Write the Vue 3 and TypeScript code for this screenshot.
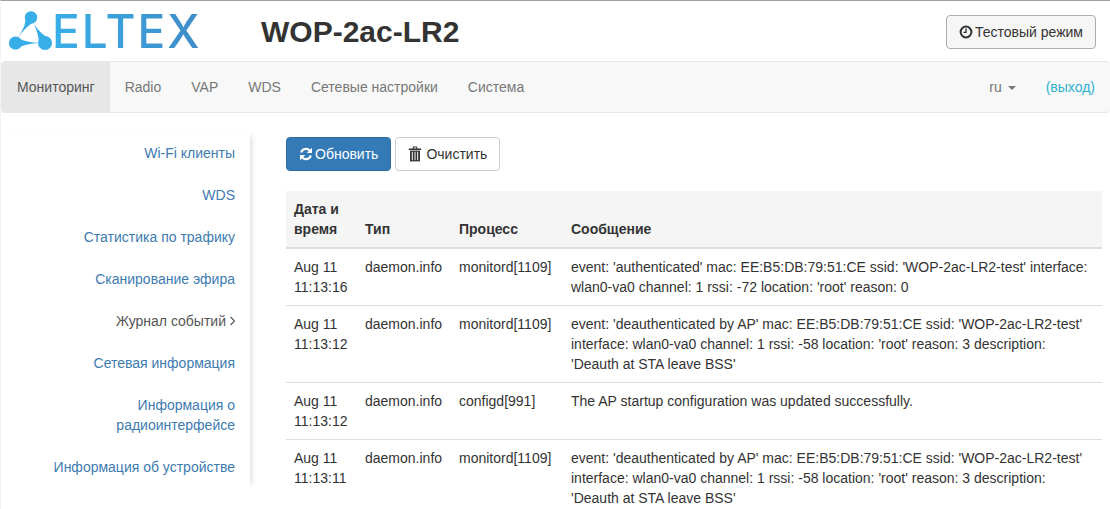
<template>
  <div class="page">
    <header class="top">
      <div class="brand">
        <svg class="brandIcon" width="60" height="60" viewBox="0 1 60 60">
          <g fill="#38aee8">
            <circle cx="31" cy="17.5" r="6.2" />
            <circle cx="15.5" cy="43" r="6.6" />
            <circle cx="45" cy="43" r="7" />
            <path d="M25.8 14.6 Q27 25 17.5 38 Q26 26.5 36 20.6Z" />
            <path d="M15.5 36.6 Q22 42 39 43 Q22 44 15.5 49.6Z" />
            <path d="M51 39.5 Q41 35 34 24 Q39.5 36 39 46.5Z" />
          </g>
        </svg>
        <span class="brandName">ELTEX</span>
      </div>
      <h1 class="title">WOP-2ac-LR2</h1>
      <button class="btn testBtn">
        <svg class="icon" width="14" height="14" viewBox="0 0 14 14">
          <circle cx="7" cy="7" r="5.4" fill="none" stroke="#333" stroke-width="2" />
          <path d="M7 3.6V7.4H4.4" fill="none" stroke="#333" stroke-width="1.4" />
        </svg>
        Тестовый режим
      </button>
    </header>

    <nav class="navbar">
      <a
        v-for="item of navList"
        :key="item"
        class="navItem"
        :class="[item === 'Мониторинг' ? 'active' : '']"
      >{{ item }}</a>
      <div class="navRight">
        <a class="lang">ru <span class="caret"></span></a>
        <a class="logout">(выход)</a>
      </div>
    </nav>

    <div class="content">
      <ul class="sidebar">
        <li v-for="item of sideList" :key="item" :class="[item === activeSide ? 'current' : '']">
          {{ item }}<svg v-if="item === activeSide" class="chevron" width="5" height="10" viewBox="0 0 5 10"><path d="M.6 1 4.4 5 .6 9" fill="none" stroke="#555" stroke-width="1.1" /></svg>
        </li>
      </ul>

      <main class="main">
        <div class="actions">
          <button class="btn primary">
            <svg class="icon" width="14" height="14" viewBox="0 0 14 14">
              <path d="M2.2 5.6A5 5 0 0 1 10.7 3.4" fill="none" stroke="#fff" stroke-width="2.2" />
              <path d="M13 .8V6H7.8Z" fill="#fff" />
              <path d="M11.8 8.4A5 5 0 0 1 3.3 10.6" fill="none" stroke="#fff" stroke-width="2.2" />
              <path d="M1 13.2V8H6.2Z" fill="#fff" />
            </svg>
            Обновить
          </button>
          <button class="btn clearBtn">
            <svg class="icon" width="14" height="16" viewBox="0 0 14 16">
              <path d="M.8 2.6H13.2V4H.8Z M4.8 2.6V.6H9.2V2.6H8.2V1.5H5.8V2.6Z" fill="#333" />
              <path d="M2 4.6H12V15.4H2Z" fill="#333" />
              <path d="M4.3 5.8V14.2M7 5.8V14.2M9.7 5.8V14.2" stroke="#fff" stroke-width="1" />
            </svg>
            Очистить
          </button>
        </div>

        <table class="logTable">
          <thead>
            <tr>
              <th class="dateCol">Дата и время</th>
              <th class="typeCol">Тип</th>
              <th class="procCol">Процесс</th>
              <th>Сообщение</th>
            </tr>
          </thead>
          <tbody>
            <tr v-for="(row, index) of rows" :key="index">
              <td>{{ row.date }}</td>
              <td>{{ row.type }}</td>
              <td>{{ row.proc }}</td>
              <td>{{ row.msg }}</td>
            </tr>
          </tbody>
        </table>
      </main>
    </div>
  </div>
</template>

<script setup lang="ts">
const navList = ['Мониторинг', 'Radio', 'VAP', 'WDS', 'Сетевые настройки', 'Система']

const activeSide = 'Журнал событий'
const sideList = [
  'Wi-Fi клиенты',
  'WDS',
  'Статистика по трафику',
  'Сканирование эфира',
  'Журнал событий',
  'Сетевая информация',
  'Информация о радиоинтерфейсе',
  'Информация об устройстве',
]

const deauth = "event: 'deauthenticated by AP' mac: EE:B5:DB:79:51:CE ssid: 'WOP-2ac-LR2-test' interface: wlan0-va0 channel: 1 rssi: -58 location: 'root' reason: 3 description: 'Deauth at STA leave BSS'"

const rows: { date: string, type: string, proc: string, msg: string }[] = [
  {
    date: 'Aug 11 11:13:16',
    type: 'daemon.info',
    proc: 'monitord[1109]',
    msg: "event: 'authenticated' mac: EE:B5:DB:79:51:CE ssid: 'WOP-2ac-LR2-test' interface: wlan0-va0 channel: 1 rssi: -72 location: 'root' reason: 0",
  },
  { date: 'Aug 11 11:13:12', type: 'daemon.info', proc: 'monitord[1109]', msg: deauth },
  { date: 'Aug 11 11:13:12', type: 'daemon.info', proc: 'configd[991]', msg: 'The AP startup configuration was updated successfully.' },
  { date: 'Aug 11 11:13:11', type: 'daemon.info', proc: 'monitord[1109]', msg: deauth },
]
</script>

<style>
html, body {
  margin: 0;
  height: 509px;
  overflow: hidden;
  background: #fff;
}
</style>

<style scoped>
.page {
  font-family: "Liberation Sans", Arial, sans-serif;
  font-size: 14px;
  line-height: 20px;
  color: #333;
  border-top: 1px solid #a0a0a0;
  border-left: 1px solid #f4f4f4;
  height: 508px;
}

.top {
  display: flex;
  align-items: center;
  height: 60px;
  padding-right: 14px;
}

.brand {
  display: flex;
  align-items: center;
  width: 260px;
  margin-left: -1px;
  flex: none;
}

.brandIcon {
  flex: none;
  margin-right: -8px;
}

.brandName {
  font-family: Inter, sans-serif;
  font-size: 46px;
  line-height: 50px;
  letter-spacing: 2px;
  font-weight: 500;
  background: linear-gradient(90deg, #38aee8, #3f8cc9);
  -webkit-background-clip: text;
  background-clip: text;
  color: transparent;
}

.title {
  flex: 1;
  margin: 0 0 0 1px;
  font-size: 30px;
  line-height: 33px;
  font-weight: 700;
  color: #333;
}

.btn {
  display: inline-flex;
  align-items: center;
  gap: 2px;
  height: 34px;
  padding: 0 12px;
  border: 1px solid #ccc;
  border-radius: 4px;
  background: #fff;
  color: #333;
  font: inherit;
  white-space: nowrap;
}

.clearBtn {
  gap: 4px;
}

.testBtn {
  margin-top: 2px;
  background: #f6f6f6;
  border-color: #adadad;
}

.primary {
  background: #337ab7;
  border-color: #2e6da4;
  color: #fff;
}

.navbar {
  display: flex;
  height: 50px;
  background: #f8f8f8;
  border: 1px solid #e7e7e7;
  border-right: none;
  border-radius: 4px;
  color: #777;
}

.navItem {
  padding: 15px;
}

.navItem.active {
  background: #e7e7e7;
  color: #555;
  border-radius: 4px 0 0 4px;
}

.navRight {
  display: flex;
  margin-left: auto;
}

.lang {
  padding: 15px;
}

.caret {
  display: inline-block;
  margin-left: 2px;
  vertical-align: middle;
  border-top: 4px solid #777;
  border-left: 4px solid transparent;
  border-right: 4px solid transparent;
}

.logout {
  padding: 15px;
  color: #2db2d0;
}

.content {
  display: grid;
  grid-template-columns: 249px 1fr;
  column-gap: 36px;
}

.sidebar {
  list-style: none;
  margin: 20px 0 0;
  padding: 0 0 0 30px;
  text-align: right;
  align-self: start;
  color: #3d7bb0;
  box-shadow: 5px 0 5px -3px rgba(0, 0, 0, 0.13);
}

.sidebar li {
  padding: 10px 15px;
}

.sidebar li + li {
  margin-top: 2px;
}

.sidebar .current {
  color: #555;
}

.chevron {
  margin-left: 4px;
}

.main {
  padding: 24px 8px 0 0;
}

.actions {
  display: flex;
  gap: 4px;
}

.logTable {
  width: 100%;
  margin-top: 20px;
  border-collapse: collapse;
}

.logTable th,
.logTable td {
  padding: 8px;
  text-align: left;
  vertical-align: top;
}

.logTable thead {
  background: #f5f5f5;
}

.logTable th {
  vertical-align: bottom;
  border-bottom: 2px solid #ddd;
}

.logTable td {
  border-top: 1px solid #ddd;
}

.logTable tbody tr:first-child td {
  border-top: none;
}

.dateCol {
  width: 55px;
}

.typeCol {
  width: 78px;
}

.procCol {
  width: 96px;
}
</style>
